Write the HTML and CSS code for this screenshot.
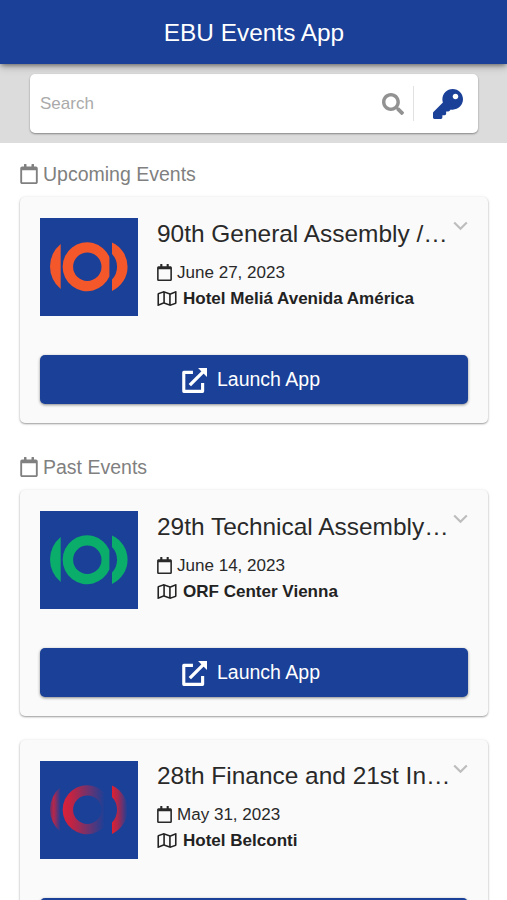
FILE: index.html
```html
<!DOCTYPE html>
<html lang="en">
<head>
<meta charset="utf-8">
<title>EBU Events App</title>
<link rel="stylesheet" href="styles.css">
</head>
<body>
<svg class="defs" aria-hidden="true">
  <defs>
    <linearGradient id="fade-left" x1="0" x2="1"><stop offset="0" stop-color="#6d3068"/><stop offset=".35" stop-color="#b8264a"/><stop offset="1" stop-color="#1a4098"/></linearGradient>
    <linearGradient id="fade-ring" x1="0" x2="1"><stop offset="0" stop-color="#d8213a"/><stop offset=".18" stop-color="#c42341"/><stop offset=".5" stop-color="#7b3168"/><stop offset=".9" stop-color="#1a4098"/></linearGradient>
    <linearGradient id="fade-right" x1="0" x2="1"><stop offset="0" stop-color="#e01f30"/><stop offset=".4" stop-color="#a52951"/><stop offset="1" stop-color="#1a4098"/></linearGradient>
    <symbol id="calendar" viewBox="0 0 448 512"><path d="M400 64h-48V12c0-6.600-5.400-12-12-12h-40c-6.600 0-12 5.400-12 12v52H160V12c0-6.600-5.400-12-12-12h-40c-6.600 0-12 5.400-12 12v52H48C21.500 64 0 85.500 0 112v352c0 26.500 21.500 48 48 48h352c26.500 0 48-21.500 48-48V112c0-26.500-21.500-48-48-48zm-6 400H54c-3.300 0-6-2.700-6-6V160h352v298c0 3.300-2.700 6-6 6z"/></symbol>
    <symbol id="map" viewBox="0 0 576 512"><path d="M560.020 32c-1.960 0-3.980.37-5.960 1.160L384.010 96H384L212 35.280A64.252 64.252 0 0 0 191.760 32c-6.690 0-13.370 1.050-19.810 3.140L20.120 87.950A32.006 32.006 0 0 0 0 117.660v346.320C0 473.170 7.530 480 15.990 480c1.960 0 3.970-.37 5.960-1.160L192 416l172 60.710a63.980 63.980 0 0 0 40.050.15l151.830-52.810A31.996 31.996 0 0 0 576 394.340V48.020c0-9.190-7.530-16.020-15.980-16.020zM224 90.420l128 45.190v285.970l-128-45.190V90.420zM48 418.050V129.070l128-44.530v286.200l-.64.23L48 418.050zm480-35.130l-128 44.530V141.260l.64-.24L528 93.950v288.970z"/></symbol>
    <symbol id="launch" viewBox="0 0 24 24"><path d="M10.500 4.200H1.700V22.400H19.800V14.500" fill="none" stroke="currentColor" stroke-width="3" stroke-linejoin="round"/><path d="M7.500 16.500L20.500 3.500" fill="none" stroke="currentColor" stroke-width="3.200"/><path d="M15.400 0H24V8.600Z"/></symbol>
    <symbol id="chevron" viewBox="0 0 15 10"><path d="M1.200 1.500L7.500 7.700L13.800 1.500" fill="none" stroke="currentColor" stroke-width="2.200"/></symbol>
    <symbol id="left-arc" viewBox="0 0 98 98"><path d="M20.700 26V71A29 29 0 0 1 20.700 26Z"/></symbol>
    <symbol id="ring" viewBox="0 0 98 98"><path fill-rule="evenodd" d="M69.400 39V58.500A24.400 24.400 0 1 1 69.400 39ZM61.500 48.700A14.200 14.200 0 1 0 33.100 48.700A14.200 14.200 0 1 0 61.500 48.700Z"/></symbol>
    <symbol id="right-arc" viewBox="0 0 98 98"><path d="M72 24.500A26.600 26.600 0 0 1 72 72.900V61.500A18.600 18.600 0 0 0 72 36Z"/></symbol>
  </defs>
</svg>
<header class="header"><h1>EBU Events App</h1></header>
<div class="search-band">
  <div class="search">
    <input class="search-input" type="text" placeholder="Search" aria-label="Search">
    <svg class="search-icon" viewBox="0 0 512 512"><path d="M505 442.700L405.300 343c-4.500-4.500-10.600-7-17-7H372c27.600-35.300 44-79.700 44-128C416 93.100 322.900 0 208 0S0 93.100 0 208s93.100 208 208 208c48.300 0 92.700-16.400 128-44v16.300c0 6.400 2.500 12.500 7 17l99.700 99.700c9.400 9.400 24.600 9.400 33.900 0l28.300-28.300c9.400-9.400 9.400-24.600.1-34zM208 336c-70.700 0-128-57.200-128-128 0-70.700 57.200-128 128-128 70.700 0 128 57.200 128 128 0 70.700-57.200 128-128 128z"/></svg>
    <div class="key"><svg class="key-icon" viewBox="0 0 512 512"><path d="M512 176.001C512 273.203 433.202 352 336 352c-11.220 0-22.190-1.062-32.827-3.069l-24.012 27.014A23.999 23.999 0 0 1 261.223 384H224v40c0 13.255-10.745 24-24 24h-40v40c0 13.255-10.745 24-24 24H24c-13.255 0-24-10.745-24-24v-78.059c0-6.365 2.529-12.470 7.029-16.971l161.802-161.802C163.108 213.814 160 195.271 160 176 160 78.798 238.797.001 335.999 0 433.488-.001 512 78.511 512 176.001zM336 128c0 26.510 21.490 48 48 48s48-21.490 48-48-21.490-48-48-48-48 21.490-48 48z"/></svg></div>
  </div>
</div>
<main class="events">
  <h2 class="section-title"><svg class="section-icon"><use href="#calendar"/></svg>Upcoming Events</h2>
  <article class="card">
    <div class="summary">
      <svg class="logo orange" viewBox="0 0 98 98"><use href="#left-arc"/><use href="#ring"/><use href="#right-arc"/></svg>
      <div class="details">
        <h3>90th General Assembly /…</h3>
        <p class="date"><svg class="date-icon"><use href="#calendar"/></svg>June 27, 2023</p>
        <p class="place"><svg class="map-icon"><use href="#map"/></svg>Hotel Meliá Avenida América</p>
      </div>
      <svg class="chevron"><use href="#chevron"/></svg>
    </div>
    <button class="launch"><svg class="launch-icon"><use href="#launch"/></svg>Launch App</button>
  </article>
  <h2 class="section-title"><svg class="section-icon"><use href="#calendar"/></svg>Past Events</h2>
  <article class="card">
    <div class="summary">
      <svg class="logo green" viewBox="0 0 98 98"><use href="#left-arc"/><use href="#ring"/><use href="#right-arc"/></svg>
      <div class="details">
        <h3>29th Technical Assembly…</h3>
        <p class="date"><svg class="date-icon"><use href="#calendar"/></svg>June 14, 2023</p>
        <p class="place"><svg class="map-icon"><use href="#map"/></svg>ORF Center Vienna</p>
      </div>
      <svg class="chevron"><use href="#chevron"/></svg>
    </div>
    <button class="launch"><svg class="launch-icon"><use href="#launch"/></svg>Launch App</button>
  </article>
  <article class="card card-last">
    <div class="summary">
      <svg class="logo" viewBox="0 0 98 98"><use href="#left-arc" fill="url(#fade-left)"/><use href="#ring" fill="url(#fade-ring)"/><use href="#right-arc" fill="url(#fade-right)"/></svg>
      <div class="details">
        <h3>28th Finance and 21st In…</h3>
        <p class="date"><svg class="date-icon"><use href="#calendar"/></svg>May 31, 2023</p>
        <p class="place"><svg class="map-icon"><use href="#map"/></svg>Hotel Belconti</p>
      </div>
      <svg class="chevron"><use href="#chevron"/></svg>
    </div>
    <button class="launch" aria-label="Launch"></button>
  </article>
</main>
</body>
</html>
```
FILE: styles.css
```css
* { box-sizing: border-box; }
html, body { height: 100%; overflow: hidden; }
body {
  margin: 0;
  display: flex;
  flex-direction: column;
  background: #fff;
  color: #222;
  font-family: "Liberation Sans", Arial, sans-serif;
}
h1, h2, h3, p { margin: 0; font-weight: 400; }
svg { display: block; flex: none; fill: currentColor; }
.defs { position: absolute; width: 0; height: 0; }
.header {
  flex: none;
  z-index: 1;
  height: 64px;
  display: flex;
  align-items: center;
  justify-content: center;
  background: #1a4098;
  color: #fff;
  box-shadow: 0 2px 5px -1px rgba(0,0,0,.5), 0 3px 9px rgba(0,0,0,.16);
}
h1 { font-size: 24.400px; line-height: 30px; padding: 2px 0 0 1px; }
.search-band { flex: none; height: 79px; padding: 10px 29px 0 30px; background: #dcdcdc; }
.search {
  height: 59px;
  display: flex;
  align-items: center;
  padding-left: 10px;
  border-radius: 5px;
  background: #fff;
  box-shadow: 0 1px 2px rgba(0,0,0,.4);
}
.search-input {
  flex: 1;
  min-width: 0;
  padding: 0;
  border: 0;
  outline: 0;
  background: transparent;
  font: 17px "Liberation Sans", Arial, sans-serif;
}
.search-input::placeholder { color: #aaa; opacity: 1; }
.search-icon { width: 22px; height: 22px; color: #929292; }
.key { width: 65px; height: 35px; margin-left: 9px; border-left: 1px solid #e2e2e2; display: flex; align-items: center; padding-left: 19px; }
.key-icon { width: 30px; height: 30px; color: #1a4098; }
.events { flex: 1; min-height: 0; padding: 0 19px 0 20px; overflow: hidden; }
.section-title {
  height: 54px;
  padding-top: 8px;
  display: flex;
  align-items: center;
  gap: 5px;
  color: #808080;
  font-size: 19.500px;
}
.section-icon { width: 18px; height: 20px; margin-top: -1px; }
.card {
  height: 226px;
  margin-bottom: 24px;
  padding: 21px 20px 19px;
  display: flex;
  flex-direction: column;
  justify-content: space-between;
  border-radius: 5px;
  background: #fafafa;
  box-shadow: 0 1px 2px rgba(0,0,0,.38), 0 0 4px rgba(0,0,0,.05);
}
.card + .section-title { margin-top: -11px; }
.summary { display: flex; }
.logo { width: 98px; height: 98px; background: #1a4098; }
.orange { color: #f4582a; }
.green { color: #0bad6a; }
.details { flex: 1; min-width: 0; padding: 1px 0 0 19px; }
.card-last .details { padding-top: 0; }
h3 { font-size: 24.450px; line-height: 30px; white-space: nowrap; color: #292929; }
.date, .place { display: flex; align-items: center; height: 26px; font-size: 17.050px; white-space: nowrap; }
.date { margin-top: 11px; gap: 5px; color: #292929; }
.place { gap: 6px; font-weight: 700; }
.date-icon { width: 15px; height: 17px; margin-top: -1px; }
.map-icon { width: 20px; height: 17px; margin-top: -1px; }
.chevron { width: 15px; height: 10px; margin-top: 3px; color: #bdbdbd; }
.launch {
  width: 100%;
  height: 49px;
  padding: 0 6px 0 0;
  border: 0;
  border-radius: 5px;
  display: flex;
  align-items: center;
  justify-content: center;
  gap: 10px;
  background: #1a4098;
  color: #fff;
  font: 19.500px "Liberation Sans", Arial, sans-serif;
  box-shadow: 0 1px 3px rgba(0,0,0,.45);
}
.launch-icon { width: 25px; height: 25px; margin-top: 1px; }
```
